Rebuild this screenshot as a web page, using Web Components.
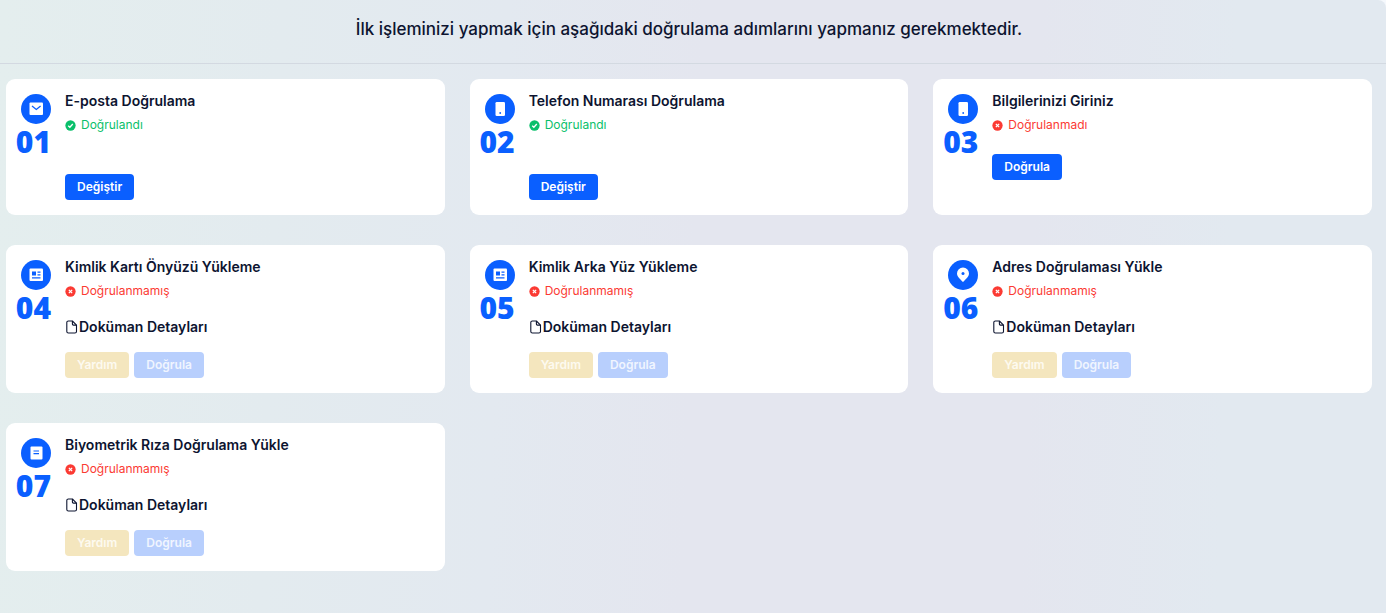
<!DOCTYPE html>
<html lang="tr">
<head>
<meta charset="utf-8">
<meta name="viewport" content="width=device-width, initial-scale=1">
<title>Hesap Doğrulama</title>
<style>
  html { background: #f5f8fc; }
  body {
    margin: 0;
    font-family: Inter, "Liberation Sans", sans-serif;
    color: #0d1430;
    --blue: #0a5fff;
    --green: #0abf6b;
    --red: #fb3a33;
  }
</style>
</head>
<body>
<verify-page>
  <span slot="heading">İlk işleminizi yapmak için aşağıdaki doğrulama adımlarını yapmanız gerekmektedir.</span>

  <verify-card number="01" icon="mail">
    E-posta Doğrulama
    <verify-status slot="status" state="ok">Doğrulandı</verify-status>
    <info-line slot="detail"></info-line>
    <action-button slot="actions">Değiştir</action-button>
  </verify-card>

  <verify-card number="02" icon="phone">
    Telefon Numarası Doğrulama
    <verify-status slot="status" state="ok">Doğrulandı</verify-status>
    <info-line slot="detail"></info-line>
    <action-button slot="actions">Değiştir</action-button>
  </verify-card>

  <verify-card number="03" icon="phone">
    Bilgilerinizi Giriniz
    <verify-status slot="status" state="error">Doğrulanmadı</verify-status>
    <action-button slot="actions">Doğrula</action-button>
  </verify-card>

  <verify-card number="04" icon="card">
    Kimlik Kartı Önyüzü Yükleme
    <verify-status slot="status" state="error">Doğrulanmamış</verify-status>
    <doc-details slot="detail">Doküman Detayları</doc-details>
    <action-button slot="actions" kind="help" disabled>Yardım</action-button>
    <action-button slot="actions" disabled>Doğrula</action-button>
  </verify-card>

  <verify-card number="05" icon="card">
    Kimlik Arka Yüz Yükleme
    <verify-status slot="status" state="error">Doğrulanmamış</verify-status>
    <doc-details slot="detail">Doküman Detayları</doc-details>
    <action-button slot="actions" kind="help" disabled>Yardım</action-button>
    <action-button slot="actions" disabled>Doğrula</action-button>
  </verify-card>

  <verify-card number="06" icon="pin">
    Adres Doğrulaması Yükle
    <verify-status slot="status" state="error">Doğrulanmamış</verify-status>
    <doc-details slot="detail">Doküman Detayları</doc-details>
    <action-button slot="actions" kind="help" disabled>Yardım</action-button>
    <action-button slot="actions" disabled>Doğrula</action-button>
  </verify-card>

  <verify-card number="07" icon="note">
    Biyometrik Rıza Doğrulama Yükle
    <verify-status slot="status" state="error">Doğrulanmamış</verify-status>
    <doc-details slot="detail">Doküman Detayları</doc-details>
    <action-button slot="actions" kind="help" disabled>Yardım</action-button>
    <action-button slot="actions" disabled>Doğrula</action-button>
  </verify-card>
</verify-page>

<template id="verify-page">
  <style>
    :host {
      display: block;
      box-sizing: border-box;
      min-height: 100vh;
      border-top-right-radius: 8px;
      background: linear-gradient(92deg, #e4eeee 0%, #e3ebef 20%, #e3e9f0 36%, #e4e6ef 50%, #e4e6ef 74%, #e2e9f0 88%, #e2e9f0 100%);
    }
    header {
      padding: 16px 8px 21px 0;
      border-bottom: 1px solid #d3d9e1;
      text-align: center;
    }
    h1 { margin: 0; font-size: 17px; line-height: 26px; font-weight: 500; }
    main {
      display: grid;
      grid-template-columns: repeat(3, minmax(0, 1fr));
      gap: 30px 25px;
      padding: 15px 14px 40px 6px;
    }
    @media (max-width: 900px) { main { grid-template-columns: 1fr; } }
  </style>
  <header><h1><slot name="heading"></slot></h1></header>
  <main><slot></slot></main>
</template>

<template id="verify-card">
  <style>
    :host {
      display: flex;
      gap: 14px;
      box-sizing: border-box;
      padding: 12px 10px 15px;
      border-radius: 9px;
      background: #fff;
    }
    .step {
      display: flex;
      flex-direction: column;
      align-items: flex-end;
      width: 35px;
      padding-top: 3px;
    }
    .disc {
      display: grid;
      place-items: center;
      width: 30px;
      height: 30px;
      border-radius: 50%;
      background: var(--blue);
    }
    .disc svg { width: 18px; height: 18px; }
    .number {
      font: 800 30px/36px "Open Sans", sans-serif;
      color: var(--blue);
    }
    .body { flex: 1; min-width: 0; }
    h2 { margin: 0 0 4px; font-size: 14px; line-height: 20px; font-weight: 600; }
    .actions { display: flex; gap: 5px; margin-top: 19px; }
    .actions.tight { margin-top: 15px; }
  </style>
  <div class="step">
    <span class="disc"></span>
    <span class="number"></span>
  </div>
  <div class="body">
    <h2><slot></slot></h2>
    <slot name="status"></slot>
    <slot name="detail"></slot>
    <div class="actions"><slot name="actions"></slot></div>
  </div>
</template>

<template id="verify-status">
  <style>
    :host {
      display: flex;
      align-items: center;
      gap: 5px;
      font-size: 12px;
      line-height: 20px;
      color: var(--red);
    }
    :host([state="ok"]) { color: var(--green); }
    svg { width: 11px; height: 11px; }
  </style>
  <svg viewBox="0 0 12 12" aria-hidden="true">
    <circle cx="6" cy="6" r="5.6" fill="currentColor"/>
    <path fill="none" stroke="#fff" stroke-width="1.4"/>
  </svg>
  <span><slot></slot></span>
</template>

<template id="info-line">
  <style>
    :host { display: block; min-height: 20px; font-size: 12px; line-height: 20px; }
  </style>
  <slot></slot>
</template>

<template id="doc-details">
  <style>
    :host { display: block; margin-top: 16px; }
    a {
      display: inline-flex;
      align-items: center;
      gap: 1px;
      vertical-align: top;
      font-size: 14px;
      line-height: 20px;
      font-weight: 600;
      color: inherit;
      text-decoration: none;
    }
    svg { width: 13px; height: 14px; }
  </style>
  <a href="#">
    <svg viewBox="0 0 13 14" fill="none" stroke="currentColor" stroke-width="1.1" stroke-linejoin="round" aria-hidden="true">
      <path d="M7.4 1H3.4A1.6 1.6 0 0 0 1.8 2.6V11.400A1.600 1.600 0 0 0 3.400 13H9.900A1.600 1.600 0 0 0 11.500 11.400V5.100Z"/>
      <path d="M7.400 1V4.100A1 1 0 0 0 8.400 5.100H11.500"/>
    </svg><slot></slot>
  </a>
</template>

<template id="action-button">
  <style>
    :host { display: block; }
    button {
      display: block;
      height: 26px;
      padding: 0 12px;
      border: 0;
      border-radius: 4px;
      background: var(--blue);
      color: #fff;
      font: inherit;
      font-size: 12px;
      line-height: 24px;
      font-weight: 600;
      cursor: pointer;
    }
    button:disabled { background: #b8cffd; color: #f0f5ff; cursor: default; }
    :host([kind="help"]) button:disabled { background: #f4e6be; color: #fdfaf0; }
  </style>
  <button type="button"><slot></slot></button>
</template>

<script>
  const ICONS = {
    mail: '<rect x="2.500" y="2.500" width="13.500" height="12.500" rx="1" fill="#fff"/><path d="M5 6l4.300 3.400L13.600 6" fill="none" stroke="var(--blue)" stroke-width="1.300"/>',
    phone: '<rect x="4.500" y="2" width="9.500" height="14" rx="1.300" fill="#fff"/><circle cx="9.200" cy="13" r=".9" fill="var(--blue)"/>',
    card: '<rect x="2.500" y="2.500" width="13.500" height="12.500" rx="1" fill="#fff"/><path d="M5 5.500h4v4H5zM10.500 5.500h3v1.200h-3zM10.500 8.300h3v1.200h-3zM5 11.200h8.500v1.200H5z" fill="var(--blue)"/>',
    pin: '<path d="M9 16C6 13 3 10.500 3 7.500a6 6 0 0 1 12 0C15 10.500 12 13 9 16z" fill="#fff"/><circle cx="9" cy="7.500" r="1.500" fill="var(--blue)"/>',
    note: '<rect x="3.500" y="2.500" width="12" height="13" rx="1" fill="#fff"/><path d="M6.500 7h5.500M6.500 9.700h5.500" stroke="var(--blue)" stroke-width="1.200"/>'
  };

  class TemplateElement extends HTMLElement {
    constructor() {
      super();
      const template = document.getElementById(this.localName);
      this.attachShadow({ mode: 'open' }).append(template.content.cloneNode(true));
    }
  }

  class VerifyCard extends TemplateElement {
    connectedCallback() {
      const root = this.shadowRoot;
      root.querySelector('.disc').innerHTML =
        `<svg viewBox="0 0 18 18" aria-hidden="true">${ICONS[this.getAttribute('icon')]}</svg>`;
      root.querySelector('.number').textContent = this.getAttribute('number');
      root.querySelector('.actions').classList.toggle('tight', !!this.querySelector('doc-details'));
    }
  }

  class VerifyStatus extends TemplateElement {
    connectedCallback() {
      const ok = this.getAttribute('state') === 'ok';
      this.shadowRoot.querySelector('path')
        .setAttribute('d', ok ? 'M3.500 6.200l1.800 1.700 3.200-3.500' : 'M4.200 4.200l3.600 3.600M7.800 4.200l-3.600 3.600');
    }
  }

  class ActionButton extends TemplateElement {
    connectedCallback() {
      this.shadowRoot.querySelector('button').disabled = this.hasAttribute('disabled');
    }
  }

  customElements.define('verify-page', class extends TemplateElement {});
  customElements.define('verify-card', VerifyCard);
  customElements.define('verify-status', VerifyStatus);
  customElements.define('info-line', class extends TemplateElement {});
  customElements.define('doc-details', class extends TemplateElement {});
  customElements.define('action-button', ActionButton);
</script>
</body>
</html>
